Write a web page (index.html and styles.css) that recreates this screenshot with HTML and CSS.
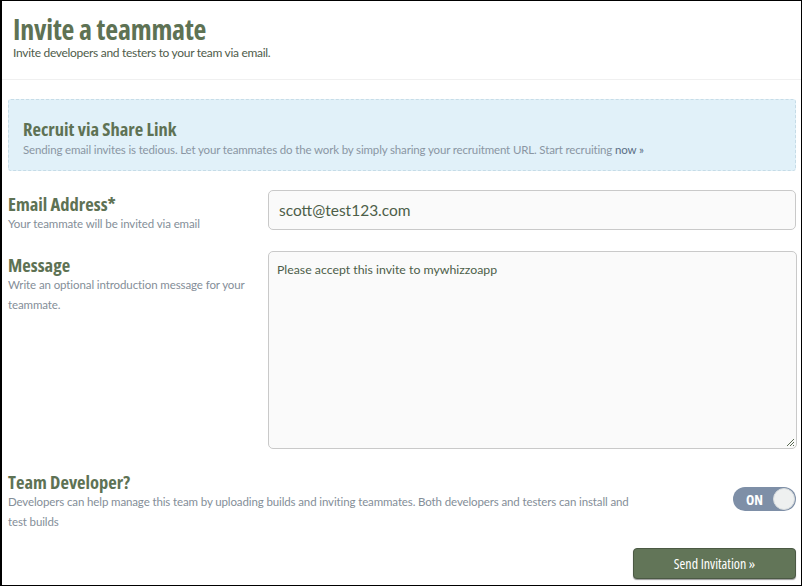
FILE: index.html
```html
<!DOCTYPE html>
<html>
<head>
<meta charset="utf-8">
<link rel="stylesheet" href="styles.css">
</head>
<body>
<div class="frame">
  <header class="head">
    <h1 class="title">Invite a teammate</h1>
    <p class="subtitle">Invite developers and testers to your team via email.</p>
  </header>
  <main class="main">
    <section class="share">
      <h2 class="heading">Recruit via Share Link</h2>
      <p class="share-text">Sending email invites is tedious. Let your teammates do the work by simply sharing your recruitment URL. Start recruiting <a class="share-link" href="#">now »</a></p>
    </section>
    <div class="row row-email">
      <div class="label">
        <h3 class="heading">Email Address*</h3>
        <p class="help">Your teammate will be invited via email</p>
      </div>
      <div class="field input">scott@test123.com</div>
    </div>
    <div class="row row-msg">
      <div class="label">
        <h3 class="heading">Message</h3>
        <p class="help help-msg">Write an optional introduction message for your teammate.</p>
      </div>
      <div class="field textarea">Please accept this invite to mywhizzoapp
        <svg class="grip" width="10" height="10" viewBox="0 0 10 10"><path d="M9 2 L2 9 M9 5 L5 9 M9 8 L8 9" stroke="#5a6b52" stroke-width="1" fill="none"/></svg>
      </div>
    </div>
    <div class="row-team">
      <div class="team-text">
        <h3 class="heading">Team Developer?</h3>
        <p class="help team-help">Developers can help manage this team by uploading builds and inviting teammates. Both developers and testers can install and test builds</p>
      </div>
      <div class="toggle"><span class="toggle-on">ON</span><span class="knob"></span></div>
    </div>
    <div class="actions">
      <button class="send">Send Invitation »</button>
    </div>
  </main>
</div>
</body>
</html>
```

FILE: styles.css
```css
html, body {
  margin: 0;
  padding: 0;
  background: #fff;
}
body {
  font-family: Lato, "Open Sans", "Liberation Sans", sans-serif;
}
.frame {
  width: 802px;
  height: 586px;
  box-sizing: border-box;
  border: 1px solid #000;
  border-left-width: 2px;
  overflow: hidden;
}
.head {
  height: 79px;
  box-sizing: border-box;
  padding: 12px 0 0 11px;
  border-bottom: 1px solid #f0f0f0;
}
.title {
  margin: 0;
  font-family: "Open Sans", sans-serif;
  font-size: 28px;
  line-height: 33px;
  font-weight: bold;
  font-stretch: 75%;
  letter-spacing: -0.2px;
  color: #5e7254;
}
.subtitle {
  margin: 0;
  font-size: 12px;
  line-height: 14px;
  letter-spacing: -0.3px;
  color: #4f5c4b;
}
.main {
  padding: 19px 5px 0 6px;
}
.share {
  height: 72px;
  box-sizing: border-box;
  background: #e1f1f9;
  border: 1px dashed #c6dce7;
  border-radius: 3px;
  padding: 19px 14px 0 14px;
}
.heading {
  margin: 0;
  font-family: "Open Sans", sans-serif;
  font-size: 18.5px;
  line-height: 20px;
  font-weight: bold;
  font-stretch: 75%;
  color: #5e7254;
}
.share-text {
  margin: 3px 0 0;
  font-size: 11.5px;
  line-height: 16px;
  letter-spacing: -0.15px;
  color: #8a96a3;
  white-space: nowrap;
}
.share-link {
  color: #5b6e86;
  text-decoration: none;
}
.row {
  display: grid;
  grid-template-columns: 260px 1fr;
  align-items: start;
}
.row-email {
  margin-top: 19px;
  height: 40px;
}
.row-msg {
  margin-top: 21px;
}
.label {
  padding-top: 4px;
}
.help {
  margin: 0;
  font-size: 11.5px;
  line-height: 19.5px;
  letter-spacing: -0.1px;
  color: #848e98;
}
.help-msg {
  width: 252px;
}
.team-help {
  letter-spacing: -0.12px;
}
.field {
  box-sizing: border-box;
  background: #fafafa;
  border: 1px solid #c9c9c9;
  border-radius: 5px;
  color: #4d5e49;
}
.input {
  height: 40px;
  padding: 8px 10px;
  font-size: 15.5px;
  line-height: 22px;
}
.textarea {
  position: relative;
  height: 198px;
  margin-right: -1px;
  padding: 9px 8px;
  font-size: 12.3px;
  line-height: 18px;
}
.grip {
  position: absolute;
  right: 1px;
  bottom: 1px;
}
.row-team {
  margin-top: 23px;
  display: flex;
  justify-content: space-between;
  align-items: flex-start;
}
.team-text {
  width: 628px;
}
.toggle {
  margin-top: 15px;
  width: 63px;
  height: 24px;
  box-sizing: border-box;
  border-radius: 12px;
  background: #7e8fa7;
  display: flex;
  align-items: center;
  justify-content: space-between;
  padding: 0 1px 0 13px;
}
.toggle-on {
  color: #fff;
  font-family: "Open Sans", sans-serif;
  font-weight: bold;
  font-size: 14px;
  font-stretch: 75%;
}
.knob {
  width: 22px;
  height: 22px;
  border-radius: 50%;
  background: #eef0f0;
  border: 1px solid #d7dbdd;
  box-sizing: border-box;
}
.actions {
  display: flex;
  justify-content: flex-end;
  margin-top: 17px;
}
.send {
  width: 163px;
  height: 31px;
  background: #627558;
  border: 1px solid #4b5944;
  border-radius: 4px;
  color: #fff;
  font-family: "Open Sans", sans-serif;
  font-stretch: 75%;
  font-size: 14px;
  box-shadow: 0 1px 1px rgba(0,0,0,0.4);
}
```
